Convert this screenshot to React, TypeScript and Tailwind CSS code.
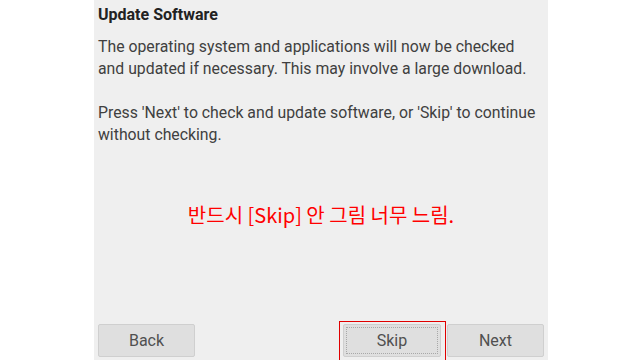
import React from "react";

const btn =
  "relative h-[33px] rounded-[2px] border border-[#cfcfcf] bg-[#dfdfdf] text-[16px] text-[#505050] flex items-center justify-center";

export default function App() {
  return (
    <div className="w-[640px] h-[360px] bg-white flex overflow-hidden" style={{ fontFamily: "Roboto, 'Noto Sans CJK KR', sans-serif" }}>
      <div className="ml-[94px] w-[454px] h-[360px] bg-[#efefef] flex flex-col px-[4px] pb-[3px]">
        <div className="pt-[5px] text-[16px] leading-[20px] font-bold text-[#222]">Update Software</div>
        <div className="mt-[11px] text-[15.8px] leading-[22px] text-[#404040]">
          <div>The operating system and applications will now be checked</div>
          <div>and updated if necessary. This may involve a large download.</div>
          <div className="h-[22px]" />
          <div>Press 'Next' to check and update software, or 'Skip' to continue</div>
          <div>without checking.</div>
        </div>
        <div
          className="mt-[55px] text-center text-[20px] leading-[28px] text-[#ff0000]"
          style={{ fontFamily: "'Noto Sans CJK KR', Roboto, sans-serif" }}
        >
          반드시 [Skip] 안 그림 너무 느림.
        </div>
        <div className="mt-auto flex items-end">
          <div className={`${btn} w-[97px]`}>Back</div>
          <div className="flex-1" />
          <div className={`${btn} w-[98px]`}>
            <span className="absolute inset-[2px] border border-dotted border-[#a8a8a8]" />
            <span className="relative">Skip</span>
            <span className="absolute left-[-5px] top-[-4px] w-[107px] h-[50px] border border-[#e00000]" />
          </div>
          <div className={`${btn} w-[97px] ml-[6px]`}>Next</div>
        </div>
      </div>
    </div>
  );
}
